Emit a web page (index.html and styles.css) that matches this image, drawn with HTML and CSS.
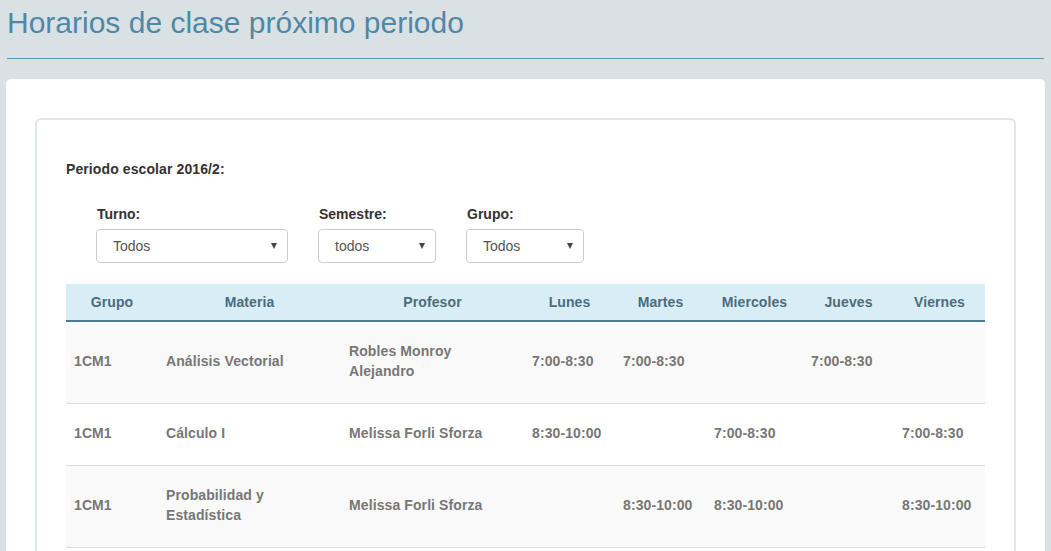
FILE: index.html
```html
<!DOCTYPE html>
<html lang="es">
<head>
<meta charset="utf-8">
<title>Horarios de clase próximo periodo</title>
<link rel="stylesheet" href="styles.css">
</head>
<body>
<header class="page-header">
  <h1 class="page-title">Horarios de clase próximo periodo</h1>
</header>
<main class="outer-card">
  <section class="inner-card">
    <p class="periodo">Periodo escolar 2016/2:</p>
    <div class="filters">
      <div class="filter">
        <label class="filter-label" for="turno">Turno:</label>
        <div class="select-wrap wide">
          <select id="turno" class="select"><option>Todos</option></select>
        </div>
      </div>
      <div class="filter">
        <label class="filter-label" for="semestre">Semestre:</label>
        <div class="select-wrap">
          <select id="semestre" class="select"><option>todos</option></select>
        </div>
      </div>
      <div class="filter">
        <label class="filter-label" for="grupo">Grupo:</label>
        <div class="select-wrap">
          <select id="grupo" class="select"><option>Todos</option></select>
        </div>
      </div>
    </div>
    <table class="schedule">
      <colgroup>
        <col class="c-grupo"><col class="c-materia"><col class="c-profesor">
        <col class="c-day"><col class="c-day"><col class="c-mier"><col class="c-day"><col class="c-day">
      </colgroup>
      <thead>
        <tr>
          <th>Grupo</th><th>Materia</th><th>Profesor</th><th>Lunes</th><th>Martes</th><th>Miercoles</th><th>Jueves</th><th>Viernes</th>
        </tr>
      </thead>
      <tbody>
        <tr>
          <td>1CM1</td><td>Análisis Vectorial</td><td>Robles Monroy Alejandro</td><td>7:00-8:30</td><td>7:00-8:30</td><td></td><td>7:00-8:30</td><td></td>
        </tr>
        <tr>
          <td>1CM1</td><td>Cálculo I</td><td>Melissa Forli Sforza</td><td>8:30-10:00</td><td></td><td>7:00-8:30</td><td></td><td>7:00-8:30</td>
        </tr>
        <tr>
          <td>1CM1</td><td>Probabilidad y Estadística</td><td>Melissa Forli Sforza</td><td></td><td>8:30-10:00</td><td>8:30-10:00</td><td></td><td>8:30-10:00</td>
        </tr>
      </tbody>
    </table>
  </section>
</main>
</body>
</html>
```

FILE: styles.css
```css
html, body {
  margin: 0;
  padding: 0;
}

body {
  background: #dae1e4;
  font-family: "Liberation Sans", Arial, Helvetica, sans-serif;
  color: #333;
  overflow: hidden;
}

.page-header {
  margin: 0 7px;
  padding: 6px 0 18px;
  border-bottom: 1px solid #5f95b3;
}

.page-title {
  margin: 0;
  font-size: 30px;
  line-height: 34px;
  font-weight: normal;
  color: #4f88a6;
}

.outer-card {
  display: block;
  margin: 20px 6px 0;
  padding: 39px 29px 60px;
  background: #fff;
  border-radius: 5px;
}

.inner-card {
  border: 2px solid #e1e7ea;
  border-radius: 6px;
  padding: 39px 29px 60px;
}

.periodo {
  margin: 0;
  font-size: 14px;
  line-height: 20px;
  font-weight: bold;
  color: #333;
  letter-spacing: 0.1px;
}

.filters {
  display: flex;
  gap: 30px;
  padding-left: 30px;
  margin-top: 25px;
}

.filter {
  display: flex;
  flex-direction: column;
}

.filter-label {
  font-size: 14px;
  line-height: 20px;
  font-weight: bold;
  color: #333;
  padding-left: 1px;
  margin-bottom: 5px;
}

.select-wrap {
  position: relative;
  width: 118px;
}

.select-wrap.wide {
  width: 192px;
}

.select-wrap::after {
  content: "";
  position: absolute;
  right: 11px;
  top: 14px;
  width: 0;
  height: 0;
  border-left: 3px solid transparent;
  border-right: 3px solid transparent;
  border-top: 6px solid #444;
  pointer-events: none;
}

.select {
  -webkit-appearance: none;
  appearance: none;
  display: block;
  width: 100%;
  height: 34px;
  box-sizing: border-box;
  margin: 0;
  padding: 0 20px 0 16px;
  border: 1px solid #ccc;
  border-radius: 4px;
  background: #fff;
  font-family: "Liberation Sans", Arial, Helvetica, sans-serif;
  font-size: 14px;
  color: #555;
}

.schedule {
  width: 919px;
  margin-top: 21px;
  border-collapse: collapse;
  table-layout: fixed;
  font-size: 14px;
  line-height: 20px;
  font-weight: bold;
  letter-spacing: 0.1px;
}

.c-grupo { width: 92px; }
.c-materia { width: 183px; }
.c-profesor { width: 183px; }
.c-day { width: 91px; }
.c-mier { width: 97px; }

.schedule th {
  background: #d9edf7;
  color: #4b6c7d;
  text-align: center;
  padding: 8px 0;
  border-bottom: 2px solid #4a7b8f;
  font-weight: bold;
}

.schedule td {
  color: #777;
  text-align: left;
  vertical-align: middle;
  padding: 19px 8px 22px;
  border-bottom: 1px solid #ddd;
}

.schedule tbody tr:nth-child(odd) td {
  background: #f9f9f9;
}
```
